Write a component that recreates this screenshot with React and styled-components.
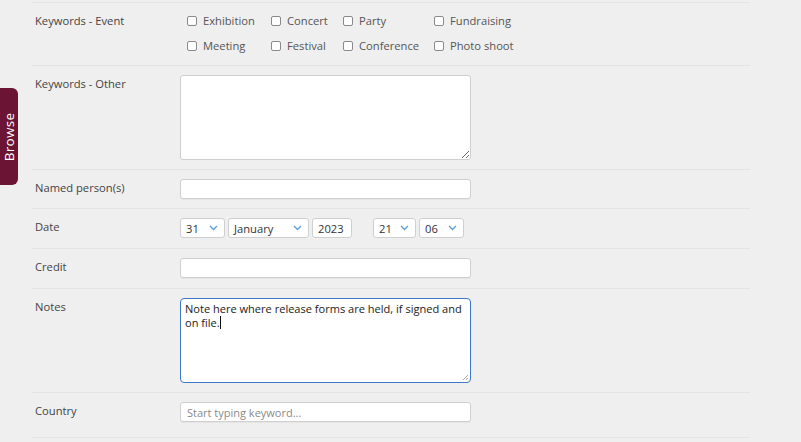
import styled, { createGlobalStyle } from 'styled-components'

const Global = createGlobalStyle`
    html, body {
        margin: 0;
        padding: 0;
        background: #efefef;
        font-family: "Open Sans", "Liberation Sans", sans-serif;
    }
`

const Page = styled.div`
    position: relative;
    min-height: 442px;
    padding: 2px 0 0 32px;
    box-sizing: border-box;
`

const Form = styled.div`
    width: 718px;
`

const Row = styled.div`
    display: grid;
    grid-template-columns: 148px 1fr;
    border-top: 1px solid #e4e4e4;
    padding: ${p => p.$pad || '9px 0 10px'};
    &:last-child {
        border-bottom: 1px solid #e4e4e4;
    }
`

const Label = styled.div`
    padding-left: 3px;
    font-size: 11.2px;
    color: #444;
    line-height: ${p => p.$lh || '18px'};
`

const Checks = styled.div`
    display: grid;
    grid-template-columns: 84px 72px 91px auto;
    padding-left: 7px;
`

const Check = styled.label`
    display: flex;
    align-items: center;
    gap: 6px;
    font-size: 11.2px;
    color: #555;
    line-height: 25px;
`

const Box = styled.span`
    width: 8px;
    height: 8px;
    border: 1px solid #8a8a8a;
    border-radius: 2px;
    background: #fff;
`

const Field = styled.input`
    width: 291px;
    height: 20px;
    box-sizing: border-box;
    border: 1px solid #cfcfcf;
    border-radius: 3px;
    background: #fff;
    box-shadow: 0 1px 1px rgba(0,0,0,0.04);
    padding: 0 6px;
    font-family: inherit;
    font-size: 11px;
    color: #333;
    outline: none;
    &::placeholder {
        color: #8a8a8a;
    }
`

const Area = styled.textarea`
    display: block;
    width: 291px;
    height: 85px;
    box-sizing: border-box;
    border: 1px solid #cfcfcf;
    border-radius: 3px;
    background: #fff;
    font-family: inherit;
    font-size: 11px;
    outline: none;
    margin: 0;
`

const FocusedArea = styled.div`
    position: relative;
    width: 291px;
    height: 85px;
    box-sizing: border-box;
    border: 1.5px solid #3f78c9;
    border-radius: 4px;
    background: #fff;
    padding: 3px 4px;
    font-size: 11.05px;
    line-height: 14px;
    color: #222;
    white-space: nowrap;
`

const Caret = styled.span`
    display: inline-block;
    width: 1px;
    height: 13px;
    background: #111;
    vertical-align: -2px;
`

const Grip = styled.svg`
    position: absolute;
    right: 1px;
    bottom: 1px;
`

const DateRow = styled.div`
    display: flex;
    gap: 3px;
`

const Spacer = styled.div`
    width: 15px;
`

const Select = styled.div`
    display: flex;
    align-items: center;
    justify-content: space-between;
    width: ${p => p.$w}px;
    height: 20px;
    box-sizing: border-box;
    border: 1px solid #cfcfcf;
    border-radius: 3px;
    background: #fff;
    padding: 0 6px 0 5px;
    font-size: 11.2px;
    color: #333;
`

const Chevron = () => (
    <svg width="9" height="6" viewBox="0 0 9 6">
        <polyline points="1,1 4.5,4.5 8,1" fill="none" stroke="#5a9fd8" strokeWidth="1.3" />
    </svg>
)

const Tab = styled.div`
    position: absolute;
    left: 0;
    top: 88px;
    width: 18px;
    height: 97px;
    background: #6b1434;
    border-radius: 0 6px 6px 0;
    display: flex;
    align-items: center;
    justify-content: center;
`

const TabText = styled.span`
    transform: rotate(-90deg);
    color: #fff;
    font-size: 13.5px;
    letter-spacing: 0.3px;
    white-space: nowrap;
`

const events = ['Exhibition', 'Concert', 'Party', 'Fundraising', 'Meeting', 'Festival', 'Conference', 'Photo shoot']

const App = () => {
    return (
        <Page>
            <Global />
            <Tab><TabText>Browse</TabText></Tab>
            <Form>
                <Row $pad="5px 0 7px">
                    <Label $lh="25px">Keywords - Event</Label>
                    <Checks>
                        {events.map(e => (
                            <Check key={e}><Box />{e}</Check>
                        ))}
                    </Checks>
                </Row>
                <Row $pad="9px 0 9px">
                    <Label>Keywords - Other</Label>
                    <Area />
                </Row>
                <Row $pad="9px 0 9px">
                    <Label>Named person(s)</Label>
                    <Field />
                </Row>
                <Row>
                    <Label>Date</Label>
                    <DateRow>
                        <Select $w={45}>31<Chevron /></Select>
                        <Select $w={81}>January<Chevron /></Select>
                        <Select $w={40}>2023</Select>
                        <Spacer />
                        <Select $w={43}>21<Chevron /></Select>
                        <Select $w={45}>06<Chevron /></Select>
                    </DateRow>
                </Row>
                <Row>
                    <Label>Credit</Label>
                    <Field />
                </Row>
                <Row $pad="9px 0 9px">
                    <Label>Notes</Label>
                    <FocusedArea>
                        Note here where release forms are held, if signed and<br />
                        on file.<Caret />
                        <Grip width="7" height="7" viewBox="0 0 7 7">
                            <line x1="1" y1="6" x2="6" y2="1" stroke="#999" strokeWidth="0.8" />
                            <line x1="4" y1="6" x2="6" y2="4" stroke="#999" strokeWidth="0.8" />
                        </Grip>
                    </FocusedArea>
                </Row>
                <Row $pad="9px 0 15px">
                    <Label>Country</Label>
                    <Field placeholder="Start typing keyword..." />
                </Row>
            </Form>
        </Page>
    )
}

export default App
